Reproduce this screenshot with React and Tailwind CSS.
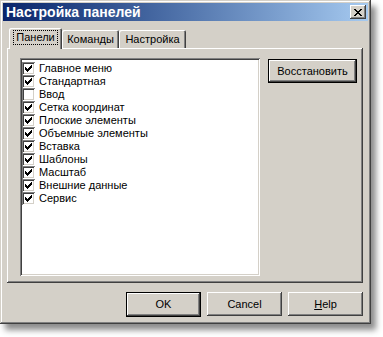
import React from 'react';

const items = [
  { label: 'Главное меню', checked: true },
  { label: 'Стандартная', checked: true },
  { label: 'Ввод', checked: false },
  { label: 'Сетка координат', checked: true },
  { label: 'Плоские элементы', checked: true },
  { label: 'Объемные элементы', checked: true },
  { label: 'Вставка', checked: true },
  { label: 'Шаблоны', checked: true },
  { label: 'Масштаб', checked: true },
  { label: 'Внешние данные', checked: true },
  { label: 'Сервис', checked: true },
];

const raised =
  'shadow-[inset_-1px_-1px_#404040,inset_1px_1px_#ffffff,inset_-2px_-2px_#808080,inset_2px_2px_#d4d0c8]';

const CheckBox = ({ checked }) => (
  <div className="w-[13px] h-[13px] bg-white shadow-[inset_1px_1px_#808080,inset_-1px_-1px_#ffffff,inset_2px_2px_#404040,inset_-2px_-2px_#d4d0c8] flex items-center justify-center shrink-0">
    {checked && (
      <svg width="7" height="7" viewBox="0 0 7 7" shapeRendering="crispEdges">
        <path d="M0 2h1v3h-1zM1 3h1v3h-1zM2 4h1v3h-1zM3 3h1v3h-1zM4 2h1v3h-1zM5 1h1v3h-1zM6 0h1v3h-1z" fill="#000" />
      </svg>
    )}
  </div>
);

const Button = ({ children, isDefault, className = '' }) => (
  <div
    className={`flex items-center justify-center bg-[#d4d0c8] text-[11px] text-black ${
      isDefault
        ? 'shadow-[inset_0_0_0_1px_#000000,inset_-2px_-2px_#404040,inset_2px_2px_#ffffff,inset_-3px_-3px_#808080]'
        : raised
    } ${className}`}
  >
    {children}
  </div>
);

export default function App() {
  return (
    <div className="w-[383px] h-[337px] bg-white" style={{ fontFamily: '"Liberation Sans", Arial, sans-serif' }}>
      <div className="w-[371px] h-[324px] bg-[#d4d0c8] p-[3px] flex flex-col shadow-[inset_-1px_-1px_#404040,inset_1px_1px_#d4d0c8,inset_-2px_-2px_#808080,inset_2px_2px_#ffffff,5px_6px_6px_rgba(0,0,0,0.45)]">
        {/* Title bar */}
        <div className="h-[18px] flex items-center bg-linear-to-r from-[#0a246a] to-[#a6caf0] pl-[3px] pr-[2px]">
          <span className="flex-1 text-white font-bold text-[14px] leading-none">Настройка панелей</span>
          <div className={`w-[16px] h-[14px] bg-[#d4d0c8] flex items-center justify-center ${raised}`}>
            <svg width="8" height="7" viewBox="0 0 8 7" shapeRendering="crispEdges">
              <path d="M0 0h2v1h-2zM6 0h2v1h-2zM1 1h2v1h-2zM5 1h2v1h-2zM2 2h4v1h-4zM3 3h2v1h-2zM2 4h4v1h-4zM1 5h2v1h-2zM5 5h2v1h-2zM0 6h2v1h-2zM6 6h2v1h-2z" fill="#000" />
            </svg>
          </div>
        </div>

        {/* Tabs */}
        <div className="mt-[6px] ml-[4px] flex items-end h-[21px] relative z-10">
          <div className="w-[53px] h-[21px] ml-[2px] -mb-[1px] bg-[#d4d0c8] rounded-t-[2px] shadow-[inset_1px_1px_#ffffff,inset_-1px_0_#404040,inset_-2px_0_#808080] flex items-start justify-center pt-[3px] text-[11px]">
            <span className="px-[2px] leading-[13px] outline outline-1 outline-dotted outline-black">Панели</span>
          </div>
          <div className="w-[57px] h-[18px] bg-[#d4d0c8] rounded-t-[2px] shadow-[inset_1px_1px_#ffffff,inset_-1px_0_#404040,inset_-2px_0_#808080] flex items-center justify-center text-[11px]">
            Команды
          </div>
          <div className="w-[67px] h-[18px] bg-[#d4d0c8] rounded-t-[2px] shadow-[inset_1px_1px_#ffffff,inset_-1px_0_#404040,inset_-2px_0_#808080] flex items-center justify-center text-[11px]">
            Настройка
          </div>
        </div>

        {/* Panel */}
        <div className={`ml-[4px] w-[356px] h-[235px] flex pl-[13px] pt-[10px] pr-[6px] ${raised}`}>
          <div className="w-[240px] h-[218px] bg-white shadow-[inset_1px_1px_#808080,inset_-1px_-1px_#ffffff,inset_2px_2px_#404040,inset_-2px_-2px_#d4d0c8] pt-[4px] pl-[2px] flex flex-col">
            {items.map((it) => (
              <div key={it.label} className="h-[13px] flex items-center gap-[4px] text-[11px] leading-none text-black">
                <CheckBox checked={it.checked} />
                <span>{it.label}</span>
              </div>
            ))}
          </div>
          <Button isDefault className="ml-[8px] mt-[1px] w-[89px] h-[24px]">Восстановить</Button>
        </div>

        {/* Bottom buttons */}
        <div className="flex justify-end gap-[6px] mt-[9px] pr-[5px]">
          <Button isDefault className="w-[75px] h-[25px]">OK</Button>
          <Button className="w-[75px] h-[24px]">Cancel</Button>
          <Button className="w-[75px] h-[24px]">
            <span><span className="underline">H</span>elp</span>
          </Button>
        </div>
      </div>
    </div>
  );
}
